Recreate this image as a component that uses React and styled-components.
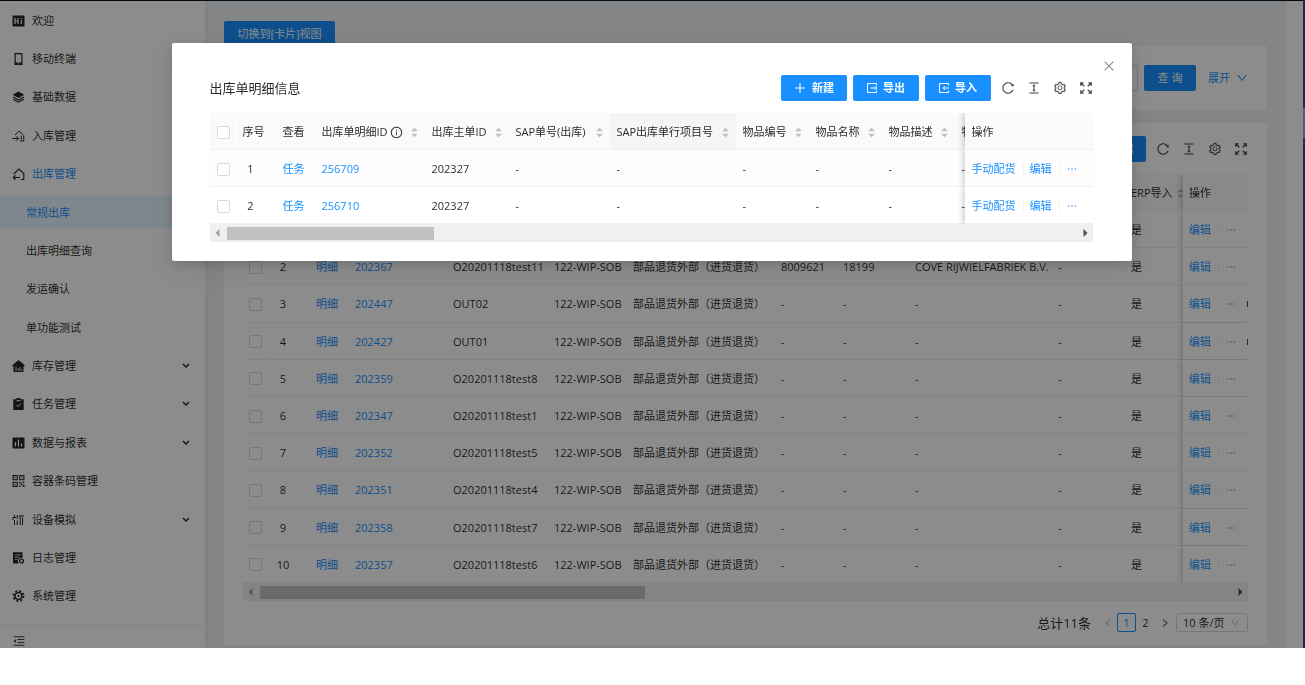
import React from "react";
import styled, { createGlobalStyle, css } from "styled-components";
import {
  AiOutlinePlus, AiOutlineReload, AiOutlineColumnHeight, AiOutlineSetting, AiOutlineInfoCircle,
  AiOutlineClose, AiOutlineDown, AiOutlineLeft, AiOutlineRight, AiOutlineEllipsis,
  AiFillCaretUp, AiFillCaretDown, AiOutlineMenuFold,
} from "react-icons/ai";

const GlobalStyle = createGlobalStyle`
  *, *::before, *::after { box-sizing: border-box; }
  body {
    margin: 0;
    background: #fff;
    color: rgba(0, 0, 0, 0.85);
    font: 11px/18px "Open Sans", "Noto Sans CJK SC", sans-serif;
  }
  button, input, select { font: inherit; color: inherit; }
  a { color: #1890ff; text-decoration: none; }
  svg { display: block; flex: none; }
`;

const Frame = styled.div`
  display: flex;
`;
const Screen = styled.div`
  position: relative;
  flex: 1;
  min-width: 0;
  display: flex;
  flex-direction: column;
`;
const TopLine = styled.div`
  height: 1px;
  background: #001529;
`;
const Body = styled.div`
  flex: 1;
  display: flex;
`;
const WindowEdge = styled.div`
  width: 2px;
  padding-top: 108px;
  background: #1f2c52;
  &::before {
    content: "";
    display: block;
    height: 30px;
    background: #4c5c86;
  }
`;
const Gutter = styled.div`
  width: 17px;
  background: #fff;
`;

/* Side navigation */
const Sider = styled.aside`
  width: 205px;
  display: flex;
  flex-direction: column;
  background: #fff;
  box-shadow: 2px 0 8px rgba(29, 35, 41, 0.05);
  z-index: 1;
`;
const Nav = styled.nav`
  flex: 1;
  display: flex;
  padding-bottom: 10px;
`;
const NavList = styled.ul`
  flex: 1;
  display: flex;
  flex-direction: column;
  margin: 0;
  padding: 0;
  list-style: none;
`;
const NavItem = styled.li`
  flex: 1;
  display: flex;
  align-items: center;
`;
const NavLink = styled.a`
  flex: 1;
  display: flex;
  align-items: center;
  gap: 7px;
  height: 32px;
  padding: 1px 15px 0 ${(p) => (p.$sub ? 26 : 12)}px;
  color: ${(p) => (p.$blue ? "#1890ff" : "rgba(0, 0, 0, 0.85)")};
  background: ${(p) => (p.$selected ? "#e6f7ff" : "transparent")};
  svg { color: #262626; }
  span { flex: 1; }
`;
const SiderFooter = styled.footer`
  height: 23px;
  padding: 8px 12px 0;
  border-top: 1px solid #f0f0f0;
`;
const PlainButton = styled.button`
  display: flex;
  align-items: center;
  padding: 0;
  border: 0;
  background: none;
  color: ${(p) => p.$color || "rgba(0, 0, 0, 0.75)"};
`;

/* Page content */
const Main = styled.main`
  flex: 1;
  min-width: 0;
  padding: 20px 19px 3px;
  background: #f0f2f5;
`;
const Button = styled.button`
  display: inline-flex;
  align-items: center;
  justify-content: center;
  gap: 5px;
  height: ${(p) => p.$height || 26}px;
  min-width: ${(p) => p.$width || 66}px;
  padding: 0 10px;
  border: 0;
  border-radius: 2px;
  background: #1890ff;
  color: #fff;
  font-weight: ${(p) => (p.$strong ? 600 : 400)};
`;
const Card = styled.section`
  padding: 13px 19px;
  background: #fff;
`;
const SearchForm = styled.form`
  display: flex;
  align-items: center;
  gap: 6px;
  height: 64px;
  margin-bottom: 13px;
  padding: 0 19px;
  background: #fff;
`;
const Label = styled.label`
  flex: 1;
  display: flex;
  align-items: center;
  gap: 6px;
`;
const Input = styled.input`
  flex: 1;
  height: 26px;
  border: 1px solid #d9d9d9;
  border-radius: 2px;
`;
const Expand = styled.a`
  display: flex;
  align-items: center;
  gap: 6px;
  padding-left: 6px;
`;

const Toolbar = styled.header`
  display: flex;
  align-items: center;
  height: 26px;
  margin-bottom: 12px;
`;
const Title = styled.h2`
  flex: 1;
  margin: 0;
  font-size: 13px;
  font-weight: 400;
`;
const ButtonRow = styled.div`
  display: flex;
  gap: 6px;
  margin-right: 10px;
`;
const IconRow = styled.div`
  display: flex;
  gap: 12px;
`;

/* Tables */
const TableClip = styled.div`
  overflow: hidden;
`;
const Table = styled.table`
  table-layout: fixed;
  width: ${(p) => p.$width}px;
  height: ${(p) => p.$height}px;
  border-collapse: separate;
  border-spacing: 0;
  th, td { padding-left: ${(p) => p.$inset || 6}px; }
`;
const cell = css`
  height: 37px;
  padding: 2px 6px 0;
  border-bottom: 1px solid #f0f0f0;
  text-align: left;
  font-weight: 400;
  white-space: nowrap;
  &:first-child { border-right: 1px solid #fff; }
`;
const sticky = css`
  position: sticky;
  right: 0;
  padding-right: 0;
  box-shadow: -2px 0 6px rgba(0, 0, 0, 0.2);
  clip-path: inset(0 0 0 -8px);
`;
const Th = styled.th`
  ${cell}
  background: ${(p) => (p.$sorted ? "#f5f5f5" : "#fafafa")};
  ${(p) => p.$sticky && sticky}
`;
const Td = styled.td`
  ${cell}
  background: ${(p) => (p.$tint ? "#fdfdfd" : "#fff")};
  ${(p) => p.$sticky && sticky}
`;
const HeadLabel = styled.div`
  display: flex;
  align-items: center;
  justify-content: ${(p) => (p.$sortable ? "space-between" : "flex-start")};
  span { display: flex; align-items: center; gap: 2px; }
`;
const SortMark = styled.i`
  display: flex;
  flex-direction: column;
  color: #bfbfbf;
  svg + svg { margin-top: -3px; }
`;
const Check = styled.input.attrs({ type: "checkbox" })`
  appearance: none;
  display: block;
  width: 13px;
  height: 13px;
  margin: 0;
  border: 1px solid #d9d9d9;
  border-radius: 2px;
  background: #fff;
`;
const Serial = styled.span`
  display: inline-block;
  width: 16px;
  text-align: center;
`;
const Actions = styled.div`
  display: flex;
  align-items: center;
  a + a {
    display: flex;
    align-items: center;
    margin-left: 7px;
  }
  a + a::before {
    content: "";
    width: 1px;
    height: 10px;
    margin-right: 6px;
    background: #f0f0f0;
  }
`;
const ClippedMark = styled.i`
  width: 1px;
  height: 6px;
  margin-left: auto;
  background: rgba(0, 0, 0, 0.7);
`;

const ScrollBar = styled.div`
  display: flex;
  align-items: center;
  justify-content: space-between;
  height: 18px;
  padding: 0 5px;
  background: #f0f0f0;
`;
const Track = styled.div`
  flex: 1;
  margin: 0 8px 0 7px;
`;
const Thumb = styled.div`
  width: ${(p) => p.$size}%;
  height: 13px;
  background: #c1c1c1;
`;

const Pager = styled.nav`
  display: flex;
  align-items: center;
  justify-content: flex-end;
  gap: 2px;
  margin-top: 12px;
`;
const Total = styled.span`
  margin-right: 5px;
  font-size: 13px;
`;
const PageButton = styled.button`
  display: flex;
  align-items: center;
  justify-content: center;
  width: 19px;
  height: 19px;
  padding: 0;
  border: 1px solid ${(p) => (p.$current ? "#1890ff" : "transparent")};
  border-radius: 2px;
  background: none;
  color: ${(p) => (p.$current ? "#1890ff" : p.disabled ? "rgba(0, 0, 0, 0.3)" : "inherit")};
`;
const PageNumbers = styled.div`
  display: flex;
`;
const SelectBox = styled.label`
  display: flex;
  align-items: center;
  width: 72px;
  height: 19px;
  padding: 0 7px 0 6px;
  border: 1px solid #d9d9d9;
  border-radius: 2px;
  svg { color: rgba(0, 0, 0, 0.3); }
`;
const Select = styled.select`
  appearance: none;
  flex: 1;
  min-width: 0;
  padding: 0;
  border: 0;
  background: none;
`;

/* Dialog */
const Overlay = styled.div`
  position: absolute;
  inset: 0;
  z-index: 10;
  display: flex;
  align-items: flex-start;
  justify-content: center;
  padding-top: 43px;
  background: rgba(0, 0, 0, 0.45);
`;
const Dialog = styled.div`
  position: relative;
  width: 960px;
  max-width: 100%;
  padding: 32px 39px 19px 38px;
  border-radius: 2px;
  background: #fff;
  box-shadow: 0 4px 12px rgba(0, 0, 0, 0.15), 0 9px 28px 8px rgba(0, 0, 0, 0.05);
`;
const CloseButton = styled(PlainButton)`
  position: absolute;
  top: 16px;
  right: 16px;
`;

const glyphs = {
  hi: (
    <>
      <path d="M0 .5h12v11H0z" />
      <path d="M2.500 3v6M5.500 3v6M2.500 6h3M8.800 5v4M8.800 3v1" stroke="#fff" strokeWidth="1.200" fill="none" />
    </>
  ),
  phone: <path fillRule="evenodd" d="M2 0h8v12H2zM3.200 1.200v8.300h5.600V1.200zM5.500 10.300h1v1h-1z" />,
  layers: (
    <>
      <path d="M6 .5 11.800 3.700 6 7 .2 3.700z" />
      <path d="M.6 6 6 9l5.400-3M.6 8.200 6 11.200l5.400-3" fill="none" stroke="currentColor" strokeWidth="1.100" />
    </>
  ),
  inbound: (
    <path d="M2.500 5 6.800 1 11.300 5.500V11H7.500M0 8.500h6M4 6.300l2.200 2.200L4 10.700M8.800 5.500v4" fill="none" stroke="currentColor" strokeWidth="1" />
  ),
  outbound: (
    <>
      <path d="M1.700 6.500V5.500L6.500 1l4.800 4.500v6H8.500" fill="none" stroke="currentColor" strokeWidth="1.100" />
      <path d="M7.500 9.500H.8M3 7.300.8 9.500 3 11.700" fill="none" stroke="currentColor" strokeWidth="1.100" />
    </>
  ),
  house: (
    <>
      <path d="M6 0 12 5v1.200h-1V12H1V6.200H0V5z" />
      <path d="M3.500 6.500V11M5.700 8v3M7.500 7v4M9.300 9v2" stroke="#fff" strokeWidth=".8" fill="none" />
    </>
  ),
  clipboard: (
    <>
      <path d="M.8 1.300H4V0h4v1.300h3.200V12H.8z" />
      <path d="M4 2.700h4M3.800 6.800l1.700 1.700 3-3" stroke="#fff" strokeWidth="1" fill="none" />
    </>
  ),
  chart: (
    <>
      <rect y=".5" width="12" height="11" rx="1" />
      <path d="M3 5v4.500M6 2.500v7M9 6.500v3" stroke="#fff" strokeWidth="1.200" fill="none" />
    </>
  ),
  qr: (
    <>
      <path d="M.6.6h4.200v4.200H.6zM7.200.6h4.200v4.200H7.200zM.6 7.200h4.200v4.200H.6z" fill="none" stroke="currentColor" strokeWidth="1.100" />
      <path d="M2.200 2.200h1v1h-1zM8.800 2.200h1v1h-1zM2.200 8.800h1v1h-1zM6.700 6.700h1.500v2H6.700zM9.800 6.700h2v1.500h-2zM8.300 8.700h1.500v1.500H8.300zM6.700 10.500h1.500V12H6.700zM10.400 9.800H12V12h-1.600z" />
    </>
  ),
  tools: (
    <path d="M2 1v2.500M3.500 3.500h-3v2.500M2 6v5M4.700 1v4M4.700 6.500V11M6.500 2h5M7.700 2v9M10 3.500V11" fill="none" stroke="currentColor" strokeWidth="1" />
  ),
  log: (
    <>
      <path d="M.5.300h9.500V6a3.300 3.300 0 0 0-3.500 5.500h-6z" />
      <path d="M2.300 3h6M2.300 5.300h4.500M2.300 7.600h2.500" stroke="#fff" strokeWidth=".8" fill="none" />
      <circle cx="9" cy="9" r="1.900" fill="none" stroke="currentColor" strokeWidth="1.400" />
    </>
  ),
  gear: (
    <>
      <circle cx="6" cy="6" r="5" fill="none" stroke="currentColor" strokeWidth="1.800" strokeDasharray="2 1.927" />
      <circle cx="6" cy="6" r="3.400" fill="none" stroke="currentColor" strokeWidth="1.400" />
      <circle cx="6" cy="6" r="1.100" />
    </>
  ),
};

function NavGlyph({ name }) {
  return (
    <svg width="13" height="12" viewBox="0 0 12 12" fill="currentColor" aria-hidden="true">
      {glyphs[name]}
    </svg>
  );
}

function LineIcon({ size = 12, d }) {
  return (
    <svg width={size} height={size} viewBox="0 0 12 12" fill="none" stroke="currentColor" strokeWidth="1" aria-hidden="true">
      <path d={d} />
    </svg>
  );
}

const bracket = "M10.500 3.500v-2h-9v9h9v-2";
const ExportIcon = () => <LineIcon d={`${bracket}M4.500 6h6.500M9 4.200 10.800 6 9 7.800`} />;
const ImportIcon = () => <LineIcon d={`${bracket}M5 6h6M6.800 4.200 5 6l1.800 1.800`} />;
const FullscreenIcon = () => (
  <LineIcon
    size={14}
    d="M4.500 4.500 1.500 1.500M1.500 4V1.500H4M7.500 4.500l3-3M8 1.500h2.500V4M4.500 7.500l-3 3M1.500 8v2.500H4M7.500 7.500l3 3M10.500 8v2.500H8"
  />
);

function Chevron() {
  return (
    <svg width="8" height="6" viewBox="0 0 8 6" fill="none" stroke="currentColor" strokeWidth="1.400" aria-hidden="true">
      <path d="M1 1l3 3 3-3" />
    </svg>
  );
}

const navItems = [
  { icon: "hi", text: "欢迎" },
  { icon: "phone", text: "移动终端" },
  { icon: "layers", text: "基础数据" },
  { icon: "inbound", text: "入库管理" },
  { icon: "outbound", text: "出库管理", blue: true },
  { sub: true, text: "常规出库", blue: true, selected: true },
  { sub: true, text: "出库明细查询" },
  { sub: true, text: "发运确认" },
  { sub: true, text: "单功能测试" },
  { icon: "house", text: "库存管理", more: true },
  { icon: "clipboard", text: "任务管理", more: true },
  { icon: "chart", text: "数据与报表", more: true },
  { icon: "qr", text: "容器条码管理" },
  { icon: "tools", text: "设备模拟", more: true },
  { icon: "log", text: "日志管理" },
  { icon: "gear", text: "系统管理" },
];

function TableTools() {
  return (
    <IconRow>
      <PlainButton aria-label="刷新"><AiOutlineReload size={14} /></PlainButton>
      <PlainButton aria-label="密度"><AiOutlineColumnHeight size={14} /></PlainButton>
      <PlainButton aria-label="列设置"><AiOutlineSetting size={14} /></PlainButton>
      <PlainButton aria-label="全屏"><FullscreenIcon /></PlainButton>
    </IconRow>
  );
}

function HeaderRow({ columns }) {
  return (
    <thead>
      <tr>
        <Th><Check aria-label="全选" /></Th>
        {columns.map((c, i) => (
          <Th key={i} $sorted={c.sorted} $sticky={i === columns.length - 1}>
            <HeadLabel $sortable={c.sort}>
              <span>{c.text}{c.info && <AiOutlineInfoCircle size={13} />}</span>
              {c.sort && <SortMark><AiFillCaretUp size={9} /><AiFillCaretDown size={9} /></SortMark>}
            </HeadLabel>
          </Th>
        ))}
      </tr>
    </thead>
  );
}

function Columns({ columns }) {
  return (
    <colgroup>
      <col style={{ width: 26 }} />
      {columns.map((c, i) => <col key={i} style={{ width: c.width }} />)}
    </colgroup>
  );
}

function HorizontalScroll({ size }) {
  return (
    <ScrollBar>
      <svg width="5" height="8" viewBox="0 0 5 8" fill="#a3a3a3" aria-hidden="true"><path d="M4.500 0v8L.5 4z" /></svg>
      <Track><Thumb $size={size} /></Track>
      <svg width="5" height="8" viewBox="0 0 5 8" fill="#505050" aria-hidden="true"><path d="M.5 0v8l4-4z" /></svg>
    </ScrollBar>
  );
}

const widthOf = (columns) => columns.reduce((sum, c) => sum + c.width, 26);

const orderColumns = [
  { text: "序号", width: 41 },
  { text: "查看", width: 39 },
  { text: "出库主单ID", width: 98, sort: true },
  { text: "出库单号", width: 101, sort: true },
  { text: "仓库", width: 79, sort: true },
  { text: "单据类型", width: 148, sort: true },
  { text: "客户", width: 62, sort: true },
  { text: "编码", width: 72, sort: true },
  { text: "客户名称", width: 143, sort: true },
  { text: "备注", width: 73, sort: true },
  { text: "ERP导入", width: 66, sort: true },
  { text: "状态", width: 100 },
  { text: "操作", width: 65 },
];

const orders = [
  { id: "202368", no: "O20201118test12" },
  { id: "202367", no: "O20201118test11", code: "8009621", num: "18199", name: "COVE RIJWIELFABRIEK B.V." },
  { id: "202447", no: "OUT02", overflow: true },
  { id: "202427", no: "OUT01", overflow: true },
  { id: "202359", no: "O20201118test8" },
  { id: "202347", no: "O20201118test1" },
  { id: "202352", no: "O20201118test5" },
  { id: "202351", no: "O20201118test4" },
  { id: "202358", no: "O20201118test7" },
  { id: "202357", no: "O20201118test6" },
];

function OrderTable() {
  return (
    <>
      <TableClip>
        <Table $width={widthOf(orderColumns)} $height={409}>
          <Columns columns={orderColumns} />
          <HeaderRow columns={orderColumns} />
          <tbody>
            {orders.map(({ id, no, code = "-", num = "-", name = "-", overflow }, i) => (
              <tr key={id}>
                <Td><Check aria-label={`选择 ${id}`} /></Td>
                <Td><Serial>{i + 1}</Serial></Td>
                <Td><a href="#detail">明细</a></Td>
                <Td><a href="#order">{id}</a></Td>
                <Td>{no}</Td>
                <Td>122-WIP-SOB</Td>
                <Td>部品退货外部（进货退货）</Td>
                <Td>{code}</Td>
                <Td>{num}</Td>
                <Td>{name}</Td>
                <Td>-</Td>
                <Td>是</Td>
                <Td />
                <Td $sticky>
                  <Actions>
                    <a href="#edit">编辑</a>
                    <a href="#more" aria-label="更多"><AiOutlineEllipsis size={12} /></a>
                    {overflow && <ClippedMark />}
                  </Actions>
                </Td>
              </tr>
            ))}
          </tbody>
        </Table>
      </TableClip>
      <HorizontalScroll size={39.7} />
    </>
  );
}

const detailColumns = [
  { text: "序号", width: 40 },
  { text: "查看", width: 39 },
  { text: "出库单明细ID", width: 110, sort: true, info: true },
  { text: "出库主单ID", width: 84, sort: true },
  { text: "SAP单号(出库)", width: 101, sort: true },
  { text: "SAP出库单行项目号", width: 126, sort: true, sorted: true },
  { text: "物品编号", width: 73, sort: true },
  { text: "物品名称", width: 73, sort: true },
  { text: "物品描述", width: 73, sort: true },
  { text: "物品规格", width: 160, sort: true },
  { text: "操作", width: 128 },
];

function DetailTable() {
  return (
    <>
      <TableClip>
        <Table $width={widthOf(detailColumns)} $height={111} $inset={7}>
          <Columns columns={detailColumns} />
          <HeaderRow columns={detailColumns} />
          <tbody>
            {["256709", "256710"].map((id, i) => (
              <tr key={id}>
                <Td $tint={i === 0}><Check aria-label={`选择 ${id}`} /></Td>
                <Td $tint={i === 0}><Serial>{i + 1}</Serial></Td>
                <Td $tint={i === 0}><a href="#task">任务</a></Td>
                <Td $tint={i === 0}><a href="#item">{id}</a></Td>
                <Td $tint={i === 0}>202327</Td>
                {[0, 1, 2, 3, 4, 5].map((n) => <Td key={n} $tint={i === 0}>-</Td>)}
                <Td $tint={i === 0} $sticky>
                  <Actions>
                    <a href="#pick">手动配货</a>
                    <a href="#edit">编辑</a>
                    <a href="#more" aria-label="更多"><AiOutlineEllipsis size={12} /></a>
                  </Actions>
                </Td>
              </tr>
            ))}
          </tbody>
        </Table>
      </TableClip>
      <HorizontalScroll size={24.5} />
    </>
  );
}

export default function App() {
  return (
    <>
      <GlobalStyle />
      <Frame>
        <Screen>
          <TopLine />
          <Body>
            <Sider>
              <Nav>
                <NavList>
                  {navItems.map((n) => (
                    <NavItem key={n.text}>
                      <NavLink href="#nav" $sub={n.sub} $blue={n.blue} $selected={n.selected}>
                        {n.icon && <NavGlyph name={n.icon} />}
                        <span>{n.text}</span>
                        {n.more && <Chevron />}
                      </NavLink>
                    </NavItem>
                  ))}
                </NavList>
              </Nav>
              <SiderFooter>
                <PlainButton aria-label="收起菜单"><AiOutlineMenuFold size={14} /></PlainButton>
              </SiderFooter>
            </Sider>
            <Main>
              <Button $height={25} $width={111}>切换到[卡片]视图</Button>
              <SearchForm>
                <Label>单号<Input type="text" /></Label>
                <Button type="button" $width={52}>查 询</Button>
                <Expand href="#expand">展开<AiOutlineDown size={12} /></Expand>
              </SearchForm>
              <Card>
                <Toolbar>
                  <Title>出库单信息</Title>
                  <ButtonRow>
                    <Button $strong><AiOutlinePlus size={14} />新建</Button>
                  </ButtonRow>
                  <TableTools />
                </Toolbar>
                <OrderTable />
                <Pager aria-label="分页">
                  <Total>总计11条</Total>
                  <PageNumbers>
                    <PageButton disabled aria-label="上一页"><AiOutlineLeft size={10} /></PageButton>
                    <PageButton $current>1</PageButton>
                    <PageButton>2</PageButton>
                    <PageButton aria-label="下一页"><AiOutlineRight size={10} /></PageButton>
                  </PageNumbers>
                  <SelectBox>
                    <Select aria-label="每页条数"><option>10 条/页</option></Select>
                    <AiOutlineDown size={10} />
                  </SelectBox>
                </Pager>
              </Card>
            </Main>
            <Gutter />
          </Body>
          <Overlay>
            <Dialog role="dialog" aria-label="出库单明细信息">
              <CloseButton $color="rgba(0, 0, 0, 0.45)" aria-label="关闭"><AiOutlineClose size={14} /></CloseButton>
              <Toolbar>
                <Title>出库单明细信息</Title>
                <ButtonRow>
                  <Button $strong><AiOutlinePlus size={14} />新建</Button>
                  <Button $strong><ExportIcon />导出</Button>
                  <Button $strong><ImportIcon />导入</Button>
                </ButtonRow>
                <TableTools />
              </Toolbar>
              <DetailTable />
            </Dialog>
          </Overlay>
        </Screen>
        <WindowEdge />
      </Frame>
    </>
  );
}
